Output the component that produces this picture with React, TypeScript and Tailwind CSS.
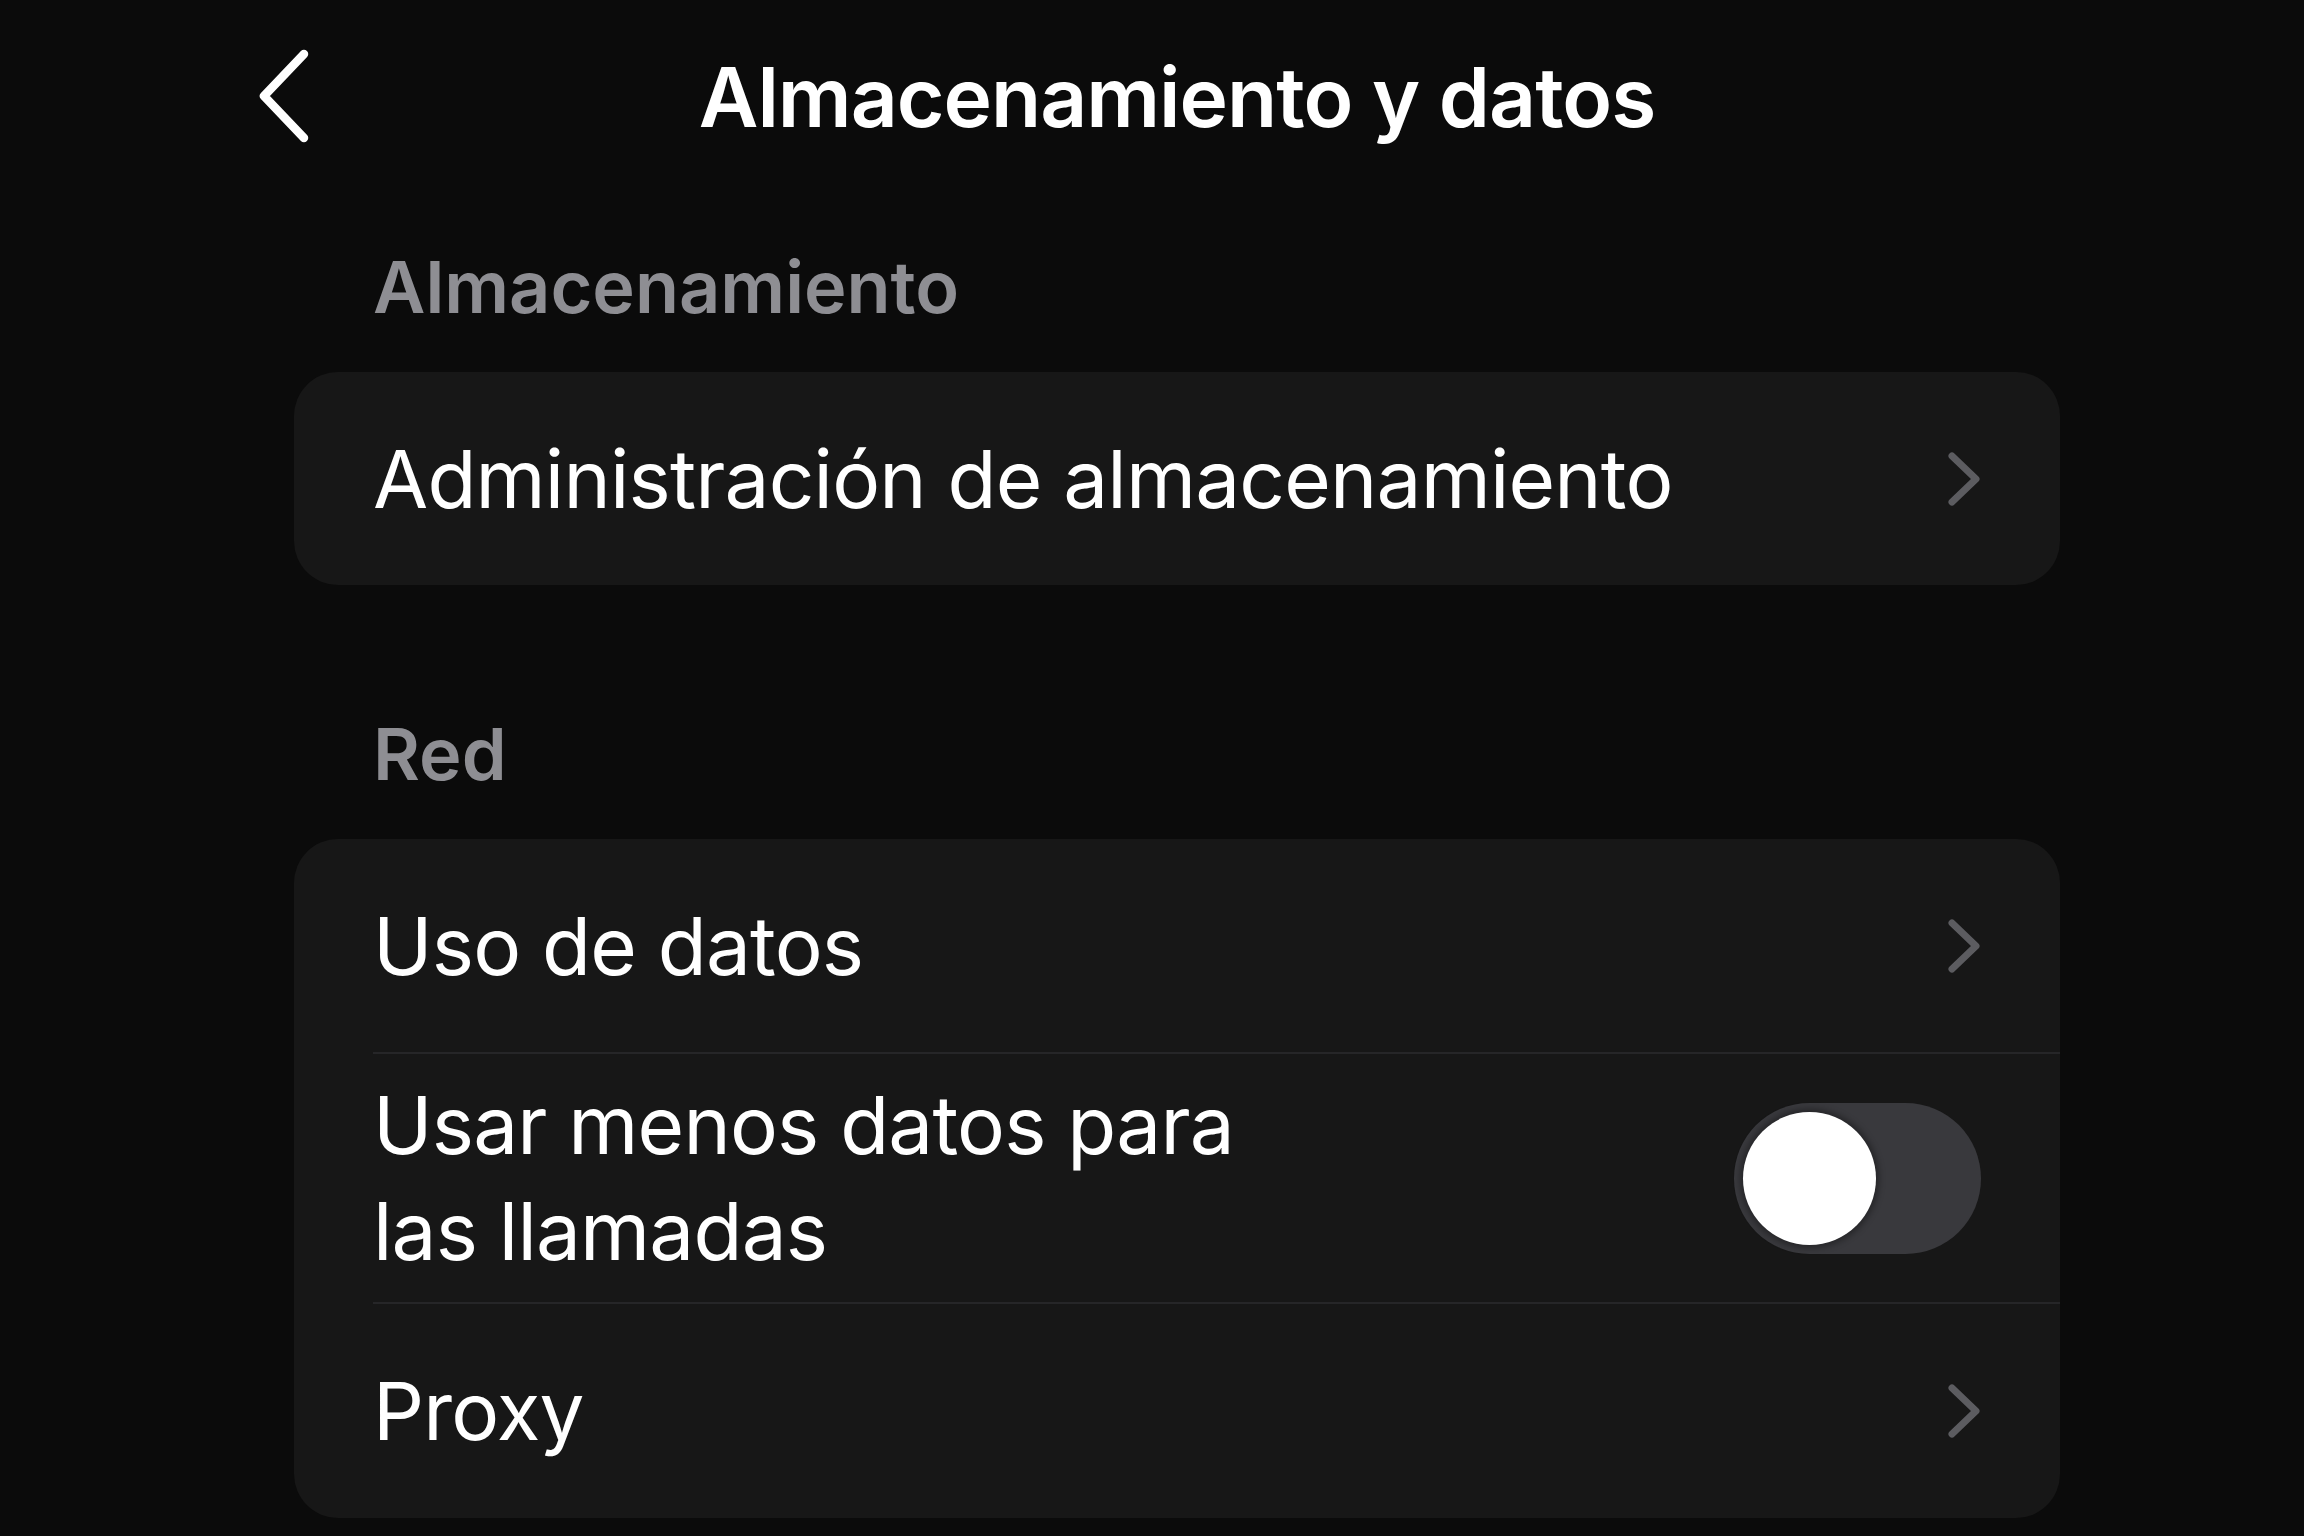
import type { ReactNode } from 'react'

function Chevron() {
  return (
    <svg width="34" height="56" viewBox="0 0 34 56" fill="none" className="shrink-0">
      <path d="M5 5 L29 28 L5 51" stroke="#5c5c60" strokeWidth="7" strokeLinecap="round" strokeLinejoin="round" />
    </svg>
  )
}

function BackIcon() {
  return (
    <svg width="56" height="96" viewBox="0 0 56 96" fill="none">
      <path d="M48 6 L8 48 L48 90" stroke="#ffffff" strokeWidth="8.5" strokeLinecap="round" strokeLinejoin="round" />
    </svg>
  )
}

function SectionLabel({ children, height }: { children: ReactNode; height: string }) {
  return (
    <div className={`flex items-end pl-[79px] pb-[49px] ${height}`}>
      <span className="text-[72px] leading-none font-semibold text-[#8e8e93]">{children}</span>
    </div>
  )
}

function Divider() {
  return <div className="ml-[79px] h-[2px] bg-[#262628]" />
}

function Toggle() {
  return (
    <div className="w-[247px] h-[151px] rounded-full bg-[#39393d] p-[9px] flex items-center shrink-0">
      <div className="w-[133px] h-[133px] rounded-full bg-white shadow-[0_0_6px_3px_rgba(0,0,0,0.35)]" />
    </div>
  )
}

function LinkRow({ label, height = 'h-[213px]' }: { label: string; height?: string }) {
  return (
    <div className={`flex items-center justify-between pl-[79px] pr-[79px] ${height}`}>
      <span className="text-[80px] leading-none tracking-[-0.8px] text-white">{label}</span>
      <Chevron />
    </div>
  )
}

export default function App() {
  return (
    <div
      className="w-[2304px] h-[1536px] overflow-hidden bg-[#0b0b0b] text-white"
      style={{ fontFamily: 'Inter, "Noto Sans", sans-serif' }}
    >
      <div className="ml-[294px] w-[1766px]">
        <header className="relative h-[196px] flex items-center justify-center">
          <div className="absolute left-[-38px] top-[48px]">
            <BackIcon />
          </div>
          <h1 className="text-[82px] font-semibold leading-none tracking-[-1px]">Almacenamiento y datos</h1>
        </header>

        <SectionLabel height="h-[176px]">Almacenamiento</SectionLabel>
        <div className="rounded-[44px] bg-[#171717] overflow-hidden">
          <LinkRow label="Administración de almacenamiento" />
        </div>

        <SectionLabel height="h-[254px]">Red</SectionLabel>
        <div className="rounded-[44px] bg-[#171717] overflow-hidden">
          <LinkRow label="Uso de datos" />
          <Divider />
          <div className="h-[248px] flex items-center justify-between pl-[79px] pr-[79px]">
            <span className="max-w-[940px] text-[80px] leading-[106px] tracking-[-0.8px] text-white">
              Usar menos datos para las llamadas
            </span>
            <Toggle />
          </div>
          <Divider />
          <LinkRow label="Proxy" height="h-[214px]" />
        </div>
      </div>
    </div>
  )
}
